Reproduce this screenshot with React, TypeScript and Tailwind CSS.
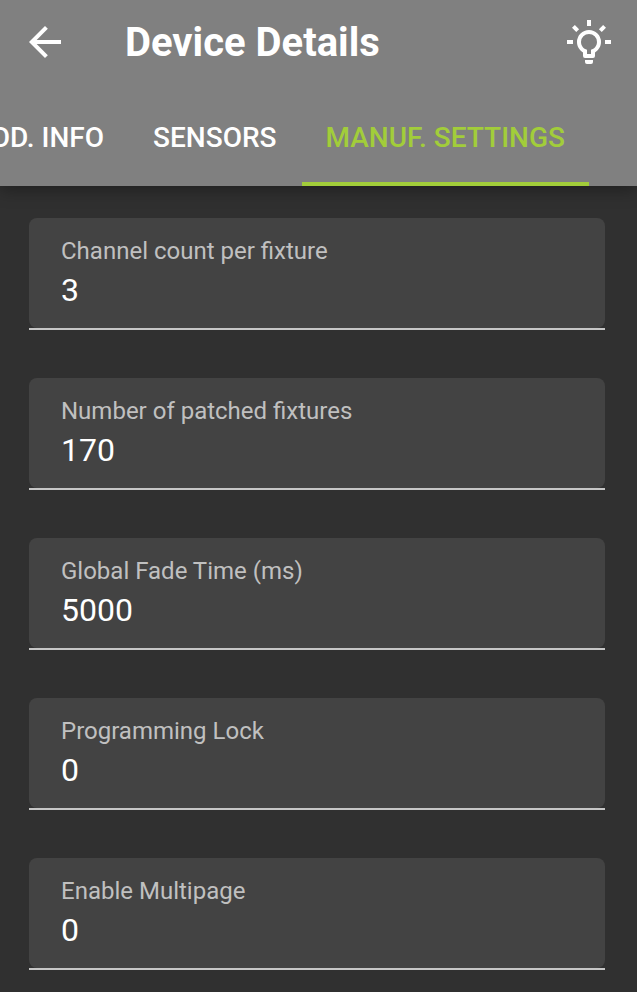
import React, { useState } from 'react';

interface Setting {
  id: string;
  label: string;
  value: string;
}

const TABS = ['PROD. INFO', 'SENSORS', 'MANUF. SETTINGS'];

const SETTINGS: Setting[] = [
  { id: 'channel-count', label: 'Channel count per fixture', value: '3' },
  { id: 'patched-fixtures', label: 'Number of patched fixtures', value: '170' },
  { id: 'fade-time', label: 'Global Fade Time (ms)', value: '5000' },
  { id: 'programming-lock', label: 'Programming Lock', value: '0' },
  { id: 'multipage', label: 'Enable Multipage', value: '0' },
];

const BackIcon: React.FC = () => (
  <svg viewBox="0 0 24 24" className="size-12" fill="currentColor" aria-hidden="true">
    <path d="M20 11H7.83l5.59-5.59L12 4l-8 8 8 8 1.41-1.41L7.83 13H20v-2z" />
  </svg>
);

const BulbIcon: React.FC = () => (
  <svg viewBox="0 0 24 24" className="size-12" fill="currentColor" aria-hidden="true">
    <path d="M20,11H23V13H20V11M1,11H4V13H1V11M13,1V4H11V1H13M4.92,3.5L7.05,5.64L5.63,7.05L3.5,4.93L4.92,3.5M16.95,5.63L19.07,3.5L20.5,4.93L18.37,7.05L16.95,5.63M12,6A6,6 0 0,1 18,12C18,14.22 16.79,16.16 15,17.2V19A1,1 0 0,1 14,20H10A1,1 0 0,1 9,19V17.2C7.21,16.16 6,14.22 6,12A6,6 0 0,1 12,6M14,21V22A1,1 0 0,1 13,23H11A1,1 0 0,1 10,22V21H14M11,18H13V15.87C14.73,15.43 16,13.86 16,12A4,4 0 0,0 12,8A4,4 0 0,0 8,12C8,13.86 9.27,15.43 11,15.87V18Z" />
  </svg>
);

interface FieldProps {
  setting: Setting;
}

const Field: React.FC<FieldProps> = ({ setting }) => (
  // the underline keeps square ends while the box above it is rounded
  <div className="border-b-2 border-[#c6c6c6]">
    <div className="rounded-lg bg-[#434343] px-8 pt-4 pb-4">
      <label htmlFor={setting.id} className="block text-2xl leading-[34px] text-[#c0c0c0]">
        {setting.label}
      </label>
      <input
        id={setting.id}
        type="text"
        inputMode="numeric"
        defaultValue={setting.value}
        className="block h-11 w-full bg-transparent text-[32px] text-white outline-none"
      />
    </div>
  </div>
);

export default function App() {
  const [active, setActive] = useState(2);

  return (
    <div className="min-h-screen bg-[#303030] font-['Roboto',sans-serif] text-white">
      <header className="relative bg-[#808080] shadow-[0_4px_16px_rgba(0,0,0,0.35)]">
        <div className="flex h-21 items-center pr-6 pl-[21px]">
          <button type="button" aria-label="Back">
            <BackIcon />
          </button>
          <h1 className="flex-1 pt-0.5 pl-14 text-[40px] leading-12 font-bold">Device Details</h1>
          <button type="button" aria-label="Identify device">
            <BulbIcon />
          </button>
        </div>

        <nav className="flex justify-end gap-px overflow-hidden pt-1 pr-12">
          {TABS.map((tab, i) => (
            <button
              key={tab}
              type="button"
              onClick={() => setActive(i)}
              className={
                i === active
                  ? 'h-[98px] shrink-0 border-b-4 border-[#a2cd3a] px-6 pt-1.5 text-[28px] font-medium whitespace-nowrap text-[#a2cd3a]'
                  : 'h-[98px] shrink-0 border-b-4 border-transparent px-6 pt-1.5 text-[28px] font-medium whitespace-nowrap'
              }
            >
              {tab}
            </button>
          ))}
        </nav>
      </header>

      <main className="flex flex-col gap-12 pt-8 pr-8 pb-5 pl-[29px]">
        {SETTINGS.map((setting) => (
          <Field key={setting.id} setting={setting} />
        ))}
      </main>
    </div>
  );
}
